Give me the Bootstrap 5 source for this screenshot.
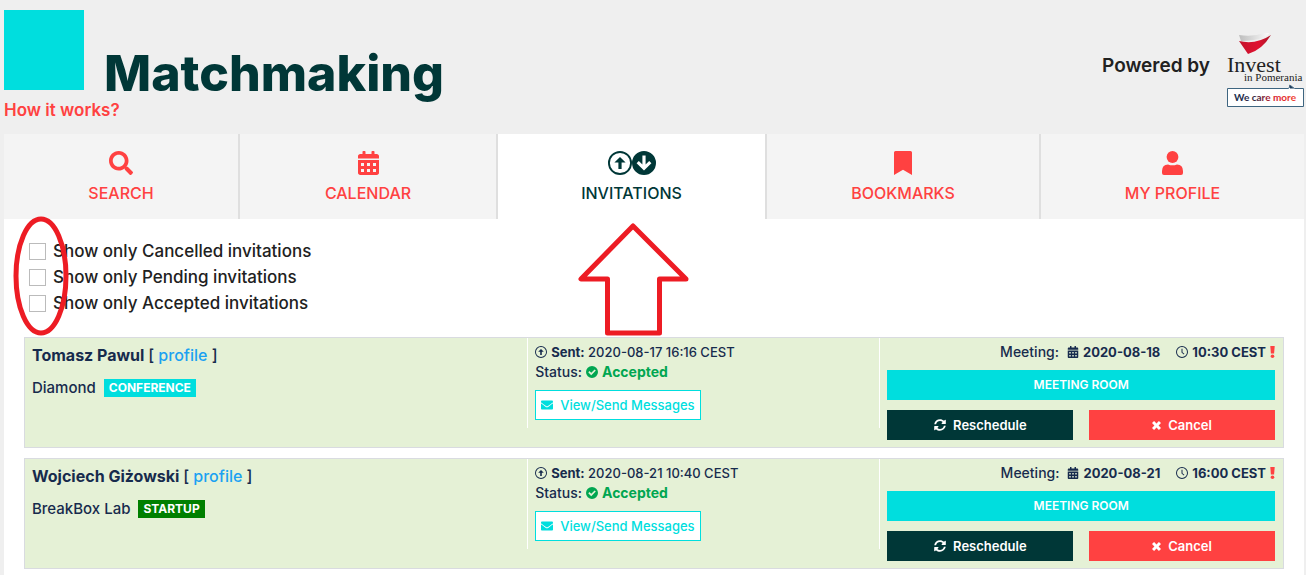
<!DOCTYPE html>
<html lang="en">
<head>
<meta charset="utf-8">
<meta name="viewport" content="width=device-width, initial-scale=1">
<title>Matchmaking – Invitations</title>
<link href="https://cdn.jsdelivr.net/npm/bootstrap@5.3.0/dist/css/bootstrap.min.css" rel="stylesheet">
<style>
:root{--mm-cyan:#00dede;--mm-red:#ff4141;--mm-dark:#003737;--mm-navy:#172b4d}
body{background:#efefef;color:#212121;font-family:Inter,"Liberation Sans",sans-serif;font-size:16px;line-height:20px;font-weight:500}
a{text-decoration:none}
.ico{width:12px;height:12px;fill:currentColor;flex:none}
.ico-sm{width:9px;height:9px}
.page{padding:0 2px 0 4px;min-height:100vh}
.page-head{padding-top:10px;height:134px}
.brand-square{width:80px;height:80px;background:var(--mm-cyan)}
.brand-title{font-size:50px;line-height:34px;font-weight:800;color:var(--mm-dark)}
.how-link{color:var(--mm-red);font-size:17px;font-weight:600;line-height:24px;margin-top:8px}
.powered{font-size:19px;font-weight:600;padding-top:23px}
.powered span{padding-top:23px}
.powered svg{width:78px;height:76px}
.tabs .nav-item{background:#f4f4f4;border-right:2px solid #dfdfdf}
.tabs .nav-item:last-child{border-right:0}
.tabs .t-search{flex:234 1 0}
.tabs .t-calendar{flex:256 1 0}
.tabs .t-invite{flex:267 1 0}
.tabs .t-book{flex:272 1 0}
.tabs .t-profile{flex:263 1 0}
.tabs .nav-link,.tabs .nav-link:hover{color:var(--mm-red);padding:17px 0 14px;font-size:16px;line-height:24px}
.tabs .nav-link svg{height:24px;width:auto;margin-bottom:6px;fill:currentColor}
.tabs .nav-item.current{background:#fff}
.tabs .current .nav-link{color:var(--mm-dark)}
.arrow-mark{top:calc(100% + 3px);left:50%;width:112px;height:116px;margin-left:-54px;z-index:3;pointer-events:none}
.panel{padding:19px 20px 6px}
.filters{padding:0 4px 21px;font-size:17px}
.filters .form-check{min-height:26px;margin:0;padding-left:25px;line-height:26px}
.filters .form-check-input{width:17px;height:17px;margin:5px 0 0 -24px;border:1px solid #bbb;border-radius:0}
.ring-mark{left:-11px;top:-22px;width:56px;height:121px;z-index:3;pointer-events:none}
.invite{display:grid;grid-template-columns:40fr 28fr 32fr;background:#e5f1d6;border:1px solid #d9dbe0;color:var(--mm-navy);font-size:14px;padding-bottom:7px;align-items:start}
.invite+.invite{margin-top:10px}
.invite>div{height:90px;padding:4px 7px 0;border-right:1px solid #fff}
.invite>div:last-child{border-right:0;height:auto;padding-right:8px}
.when{font-size:13px}
.who{font-size:16px;line-height:26px;font-weight:700;margin-bottom:10px}
.who span{font-weight:500}
.who a{color:#1ba1f2}
.firm{font-size:15px}
.tag{color:#fff;font-size:12px;line-height:18px;font-weight:700;padding:0 5px}
.tag-conf{background:var(--mm-cyan)}
.tag-start{background:#008000}
.invite .mm-btn{border-radius:0;border:1px solid transparent;font-size:13px;line-height:20px;font-weight:600;padding:4px 5px;display:flex;align-items:center;justify-content:center;gap:7px}
.mm-room,.mm-room:hover{background:var(--mm-cyan);color:#fff}
.mm-resch,.mm-resch:hover{background:var(--mm-dark);color:#fff}
.mm-cancel,.mm-cancel:hover{background:var(--mm-red);color:#fff}
.invite .mm-msg{background:#fff;color:var(--mm-cyan);border-color:var(--mm-cyan);margin-top:8px;font-weight:500}
.invite .mm-room{font-size:12px}
.ok{color:#00a651}
.alert-mark{height:12px;width:5px;fill:var(--mm-red)}
.actions{display:grid;grid-template-columns:1fr 1fr;gap:16px;margin-top:10px}
</style>
</head>
<body>
<svg class="d-none" aria-hidden="true">
<symbol id="i-up" viewBox="0 0 24 24"><path fill-rule="evenodd" d="M12 0a12 12 0 1 0 0 24a12 12 0 1 0 0-24zM12 1.900a10.100 10.100 0 1 1 0 20.200a10.100 10.100 0 1 1 0-20.200zM12 6l5.600 5.600h-4v6.400h-3.200v-6.400h-4z"/></symbol>
<symbol id="i-down" viewBox="0 0 24 24"><path fill-rule="evenodd" d="M12 0a12 12 0 1 0 0 24a12 12 0 1 0 0-24zM10.400 4.600h3.200v9l3.600-3.600 2.200 2.200L12 19.600l-7.400-7.400L6.800 10l3.600 3.600z"/></symbol>
<symbol id="i-cal" viewBox="0 0 448 512"><path fill-rule="evenodd" d="M0 464c0 26.500 21.500 48 48 48h352c26.500 0 48-21.500 48-48V192H0zM64 256h64v64H64zM192 256h64v64h-64zM320 256h64v64h-64zM64 384h64v64H64zM192 384h64v64h-64zM320 384h64v64h-64zM400 64h-48V16c0-9-7-16-16-16h-32c-9 0-16 7-16 16v48H160V16c0-9-7-16-16-16h-32c-9 0-16 7-16 16v48H48C21 64 0 85 0 112v48h448v-48c0-27-21-48-48-48z"/></symbol>
<symbol id="i-check" viewBox="0 0 24 24"><path fill-rule="evenodd" d="M12 0a12 12 0 1 0 0 24a12 12 0 1 0 0-24zM4.500 12.500L7 10l3.500 3.500L17.200 6.800l2.400 2.400-9.100 9.200z"/></symbol>
<symbol id="i-mail" viewBox="0 64 512 384"><path d="M502.300 190.800c3.900-3.100 9.700-.2 9.700 4.700V400c0 26.500-21.500 48-48 48H48c-26.500 0-48-21.500-48-48V195.600c0-5 5.700-7.800 9.700-4.700 22.400 17.400 52.100 39.500 154.100 113.600 21.100 15.400 56.700 47.800 92.200 47.600 35.700.3 72-32.800 92.300-47.600 102-74.100 131.600-96.300 154-113.700zM256 320c23.200.4 56.600-29.200 73.400-41.400 132.700-96.300 142.800-104.700 173.400-128.700 5.800-4.500 9.200-11.500 9.200-18.900v-19c0-26.500-21.500-48-48-48H48c-26.500 0-48 21.500-48 48v19c0 7.400 3.400 14.300 9.200 18.900 30.600 23.900 40.700 32.400 173.400 128.700 16.800 12.200 50.200 41.800 73.400 41.400z"/></symbol>
<symbol id="i-clock" viewBox="0 0 24 24"><path fill-rule="evenodd" d="M12 0a12 12 0 1 0 0 24a12 12 0 1 0 0-24zM12 2a10 10 0 1 1 0 20a10 10 0 1 1 0-20zM11 5.500h2v6.800l3.800 3-1.200 1.600-4.600-3.700z"/></symbol>
<symbol id="i-sync" viewBox="0 0 512 512"><path d="M370.720 133.280C339.458 104.008 298.888 87.962 255.848 88c-77.458.068-144.328 53.178-162.791 126.850-1.344 5.363-6.122 9.150-11.651 9.150H24.103c-7.498 0-13.194-6.807-11.807-14.176C33.933 94.924 134.813 8 256 8c66.448 0 126.791 26.136 171.315 68.685L463.030 40.970C478.149 25.851 504 36.559 504 57.941V192c0 13.255-10.745 24-24 24H345.941c-21.382 0-32.090-25.851-16.971-40.971l41.750-41.749zM32 296h134.059c21.382 0 32.090 25.851 16.971 40.971l-41.750 41.750c31.262 29.273 71.835 45.319 114.876 45.280 77.418-.070 144.315-53.144 162.787-126.849 1.344-5.363 6.122-9.150 11.651-9.150h57.304c7.498 0 13.194 6.807 11.807 14.176C478.067 417.076 377.187 504 256 504c-66.448 0-126.791-26.136-171.315-68.685L48.970 471.030C33.851 486.149 8 475.441 8 454.059V320c0-13.255 10.745-24 24-24z"/></symbol>
<symbol id="i-x" viewBox="0 0 10 10"><path d="M0 2.300L2.300 0 5 2.700 7.700 0 10 2.300 7.300 5 10 7.700 7.700 10 5 7.300 2.300 10 0 7.700 2.700 5z"/></symbol>
<symbol id="i-bang" viewBox="0 0 5 12"><path d="M.3 0h4.400L4.100 7.600H.9z"/><circle cx="2.500" cy="10.200" r="1.800"/></symbol>
</svg>

<div class="page d-flex flex-column">
<header class="page-head d-flex justify-content-between">
  <div>
    <div class="d-flex align-items-end">
      <div class="brand-square"></div>
      <h1 class="brand-title mb-0 ms-3 ps-1">Matchmaking</h1>
    </div>
    <a class="how-link d-block" href="#">How it works?</a>
  </div>
  <div class="powered d-flex align-items-start gap-3">
    <span>Powered by</span>
    <svg viewBox="0 0 78 76" role="img" aria-label="Invest in Pomerania">
      <defs>
        <linearGradient id="g-sail" x1="0" x2="1"><stop offset="0" stop-color="#bdbdbd"/><stop offset="1" stop-color="#fff"/></linearGradient>
        <linearGradient id="g-hull" x1="0" x2="1"><stop offset="0" stop-color="#c4142c"/><stop offset=".6" stop-color="#e01030"/><stop offset="1" stop-color="#a81828"/></linearGradient>
        <linearGradient id="g-care" x1="0" x2="1"><stop offset="0" stop-color="#1a2b4d"/><stop offset=".35" stop-color="#3d2840"/><stop offset=".65" stop-color="#d8202e"/><stop offset="1" stop-color="#f04030"/></linearGradient>
      </defs>
      <path fill="url(#g-sail)" d="M13 2q17 3 32-5q-3 6-8 8q-10 3-22 3z"/>
      <path fill="url(#g-hull)" d="M13 8q17 4 32-6q-9 15-23 19z"/>
      <text x="1" y="39" font-family="'Liberation Serif',serif" font-size="22" font-weight="400" fill="#222">Invest</text>
      <text x="18" y="48" font-family="'Liberation Serif',serif" font-size="11" font-weight="400" fill="#222">in Pomerania</text>
      <path fill="#fff" stroke="#3e6580" d="M1.500 55.500h61l2-3 4 3h9v18h-76z"/>
      <path fill="#1d3d5c" d="M63 51.500l5 4h-4z"/>
      <text x="8" y="68" font-family="Lato,sans-serif" font-size="10" font-weight="700" fill="url(#g-care)">We care more</text>
    </svg>
  </div>
</header>

<nav>
<ul class="nav tabs flex-nowrap text-center">
  <li class="nav-item t-search"><a class="nav-link" href="#">
    <svg class="d-block mx-auto" viewBox="0 0 512 512" aria-hidden="true"><path d="M505 442.700L405.300 343c-4.500-4.500-10.600-7-17-7H372c27.600-35.300 44-79.700 44-128C416 93.100 322.900 0 208 0S0 93.100 0 208s93.100 208 208 208c48.300 0 92.700-16.400 128-44v16.300c0 6.400 2.500 12.500 7 17l99.700 99.700c9.400 9.400 24.600 9.400 33.900 0l28.300-28.300c9.400-9.400 9.400-24.600.1-34zM208 336c-70.700 0-128-57.200-128-128 0-70.700 57.200-128 128-128 70.700 0 128 57.200 128 128 0 70.700-57.200 128-128 128z"/></svg>
    SEARCH</a></li>
  <li class="nav-item t-calendar"><a class="nav-link" href="#">
    <svg class="d-block mx-auto" viewBox="0 0 448 512" aria-hidden="true"><use href="#i-cal"/></svg>
    CALENDAR</a></li>
  <li class="nav-item t-invite current position-relative"><a class="nav-link" href="#" aria-current="page">
    <svg class="d-block mx-auto" viewBox="0 0 48 24" aria-hidden="true"><use href="#i-up" width="24" height="24"/><use href="#i-down" x="24" width="24" height="24"/></svg>
    INVITATIONS</a>
    <svg class="arrow-mark position-absolute" viewBox="0 0 112 116" aria-hidden="true"><path fill="none" stroke="#ed1c24" stroke-width="5" stroke-linejoin="round" d="M55 4L3 57h26.500v54h52V57H108z"/></svg>
  </li>
  <li class="nav-item t-book"><a class="nav-link" href="#">
    <svg class="d-block mx-auto" viewBox="0 0 384 512" aria-hidden="true"><path d="M0 512V32Q0 0 32 0h320q32 0 32 32v480L192 400z"/></svg>
    BOOKMARKS</a></li>
  <li class="nav-item t-profile"><a class="nav-link" href="#">
    <svg class="d-block mx-auto" viewBox="0 0 21 24" aria-hidden="true"><circle cx="10.500" cy="6" r="5.900"/><path d="M6 13.400q4.500 1.800 9 0q6 .3 6 6.600v2q0 2-2 2H2q-2 0-2-2v-2q0-6.300 6-6.600z"/></svg>
    MY PROFILE</a></li>
</ul>
</nav>

<main class="panel bg-white flex-grow-1">
  <form class="filters position-relative">
    <div class="form-check"><input class="form-check-input" type="checkbox" id="f1"><label class="form-check-label" for="f1">Show only Cancelled invitations</label></div>
    <div class="form-check"><input class="form-check-input" type="checkbox" id="f2"><label class="form-check-label" for="f2">Show only Pending invitations</label></div>
    <div class="form-check"><input class="form-check-input" type="checkbox" id="f3"><label class="form-check-label" for="f3">Show only Accepted invitations</label></div>
    <svg class="ring-mark position-absolute" viewBox="0 0 56 121" aria-hidden="true"><ellipse cx="28" cy="60" rx="25" ry="57" fill="none" stroke="#ed1c24" stroke-width="5"/></svg>
  </form>

  <article class="invite">
    <div>
      <div class="who">Tomasz Pawul <span>[ <a href="#">profile</a> ]</span></div>
      <div class="firm d-flex align-items-center gap-2"><span>Diamond</span><span class="tag tag-conf">CONFERENCE</span></div>
    </div>
    <div>
      <div class="when d-flex align-items-center gap-1"><svg class="ico" aria-hidden="true"><use href="#i-up"/></svg><span><b>Sent:</b> 2020-08-17 16:16 CEST</span></div>
      <div class="d-flex align-items-center gap-1"><span>Status:</span><svg class="ico ok" aria-hidden="true"><use href="#i-check"/></svg><b class="ok">Accepted</b></div>
      <div class="d-flex"><button type="button" class="btn mm-btn mm-msg"><svg class="ico" aria-hidden="true"><use href="#i-mail"/></svg>View/Send Messages</button></div>
    </div>
    <div>
      <div class="d-flex align-items-center justify-content-end gap-1"><span class="me-1">Meeting:</span><svg class="ico" aria-hidden="true"><use href="#i-cal"/></svg><b class="when me-2">2020-08-18</b><svg class="ico ms-1" aria-hidden="true"><use href="#i-clock"/></svg><b class="when">10:30 CEST</b><svg class="alert-mark" aria-hidden="true"><use href="#i-bang"/></svg></div>
      <button type="button" class="btn mm-btn mm-room w-100 mt-2">MEETING ROOM</button>
      <div class="actions"><button type="button" class="btn mm-btn mm-resch"><svg class="ico" aria-hidden="true"><use href="#i-sync"/></svg>Reschedule</button><button type="button" class="btn mm-btn mm-cancel"><svg class="ico ico-sm" aria-hidden="true"><use href="#i-x"/></svg>Cancel</button></div>
    </div>
  </article>

  <article class="invite">
    <div>
      <div class="who">Wojciech Giżowski <span>[ <a href="#">profile</a> ]</span></div>
      <div class="firm d-flex align-items-center gap-2"><span>BreakBox Lab</span><span class="tag tag-start">STARTUP</span></div>
    </div>
    <div>
      <div class="when d-flex align-items-center gap-1"><svg class="ico" aria-hidden="true"><use href="#i-up"/></svg><span><b>Sent:</b> 2020-08-21 10:40 CEST</span></div>
      <div class="d-flex align-items-center gap-1"><span>Status:</span><svg class="ico ok" aria-hidden="true"><use href="#i-check"/></svg><b class="ok">Accepted</b></div>
      <div class="d-flex"><button type="button" class="btn mm-btn mm-msg"><svg class="ico" aria-hidden="true"><use href="#i-mail"/></svg>View/Send Messages</button></div>
    </div>
    <div>
      <div class="d-flex align-items-center justify-content-end gap-1"><span class="me-1">Meeting:</span><svg class="ico" aria-hidden="true"><use href="#i-cal"/></svg><b class="when me-2">2020-08-21</b><svg class="ico ms-1" aria-hidden="true"><use href="#i-clock"/></svg><b class="when">16:00 CEST</b><svg class="alert-mark" aria-hidden="true"><use href="#i-bang"/></svg></div>
      <button type="button" class="btn mm-btn mm-room w-100 mt-2">MEETING ROOM</button>
      <div class="actions"><button type="button" class="btn mm-btn mm-resch"><svg class="ico" aria-hidden="true"><use href="#i-sync"/></svg>Reschedule</button><button type="button" class="btn mm-btn mm-cancel"><svg class="ico ico-sm" aria-hidden="true"><use href="#i-x"/></svg>Cancel</button></div>
    </div>
  </article>
</main>
</div>
<script src="https://cdn.jsdelivr.net/npm/bootstrap@5.3.0/dist/js/bootstrap.bundle.min.js"></script>
</body>
</html>
